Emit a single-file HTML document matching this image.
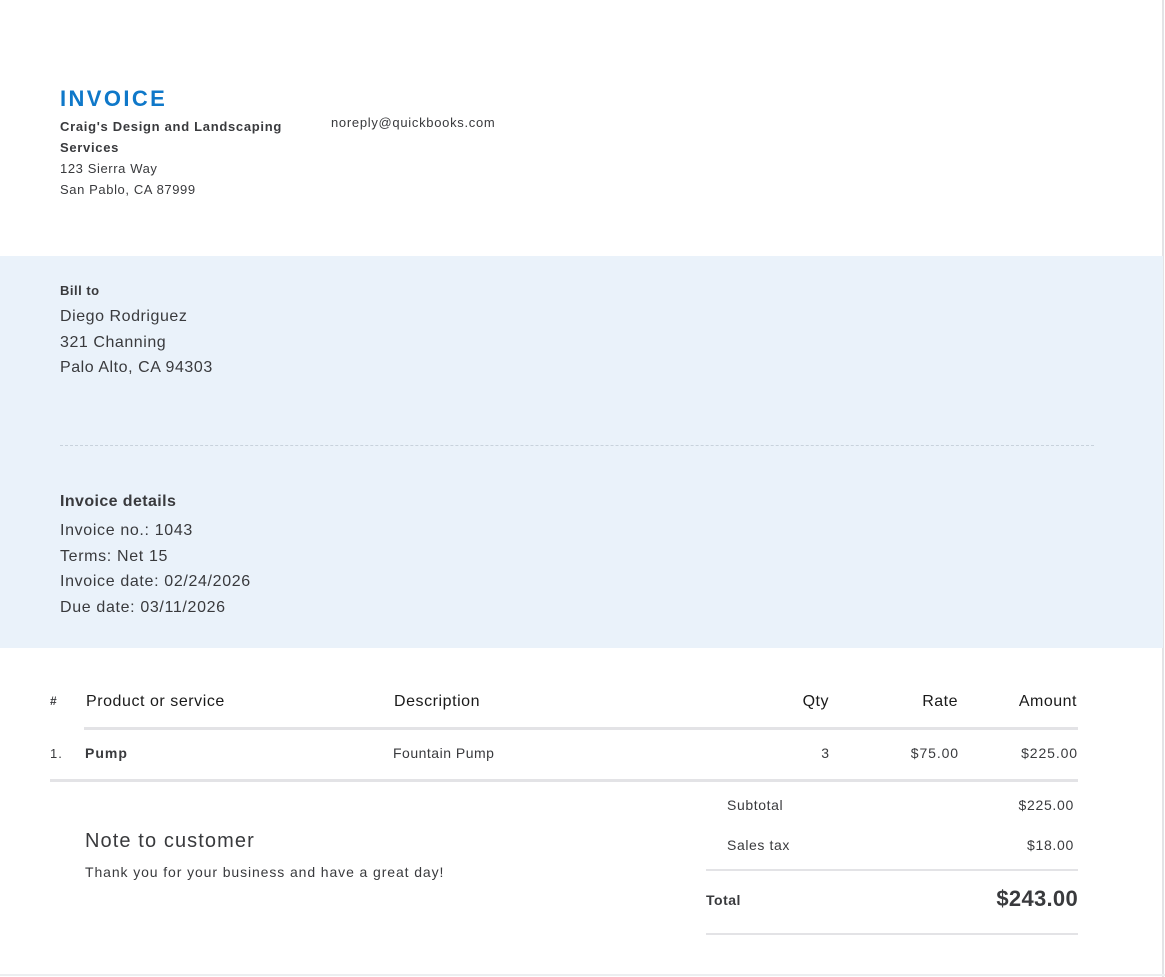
<!DOCTYPE html>
<html><head><meta charset="utf-8"><style>
*{margin:0;padding:0;box-sizing:border-box}
body{width:1165px;height:977px;background:#fff;font-family:"Liberation Sans",Arial,sans-serif;color:#393a3d;position:relative;overflow:hidden}
.a{position:absolute;white-space:nowrap}
.r{text-align:right}
</style></head><body>
<div class="a" style="left:1162px;top:0;width:2px;height:977px;background:#e3e3e6"></div>
<div class="a" style="left:0;top:974px;width:1165px;height:2px;background:#eceef0"></div>

<div class="a" style="left:60px;top:86px;font-size:22px;font-weight:bold;color:#0f78c9;letter-spacing:2.4px">INVOICE</div>
<div class="a" style="left:60px;top:116px;font-size:13px;font-weight:bold;line-height:21px;letter-spacing:0.7px">Craig's Design and Landscaping<br>Services</div>
<div class="a" style="left:60px;top:158px;font-size:13px;line-height:21px;letter-spacing:0.6px">123 Sierra Way<br>San Pablo, CA 87999</div>
<div class="a" style="left:331px;top:115px;font-size:13px;letter-spacing:0.7px">noreply@quickbooks.com</div>

<div class="a" style="left:0;top:256px;width:1163px;height:392px;background:#eaf2fa"></div>
<div class="a" style="left:60px;top:283px;font-size:13px;font-weight:bold;letter-spacing:0.5px">Bill to</div>
<div class="a" style="left:60px;top:304px;font-size:16px;line-height:25.5px;letter-spacing:0.55px">Diego Rodriguez<br>321 Channing<br>Palo Alto, CA 94303</div>
<div class="a" style="left:60px;top:445px;width:1034px;border-top:1px dashed #c8d2dc"></div>
<div class="a" style="left:60px;top:493px;font-size:16px;font-weight:bold;letter-spacing:0.4px">Invoice details</div>
<div class="a" style="left:60px;top:518px;font-size:16px;line-height:25.7px;letter-spacing:0.65px">Invoice no.: 1043<br>Terms: Net 15<br>Invoice date: 02/24/2026<br>Due date: 03/11/2026</div>

<div class="a" style="left:50px;top:694px;font-size:12px;font-weight:bold">#</div>
<div class="a" style="left:86px;top:693px;font-size:16px;color:#1a1a1a;letter-spacing:0.55px">Product or service</div>
<div class="a" style="left:394px;top:693px;font-size:16px;color:#1a1a1a;letter-spacing:0.55px">Description</div>
<div class="a r" style="left:700px;width:129px;top:693px;font-size:16px;color:#1a1a1a;letter-spacing:0.5px">Qty</div>
<div class="a r" style="left:860px;width:98px;top:693px;font-size:16px;color:#1a1a1a;letter-spacing:0.5px">Rate</div>
<div class="a r" style="left:980px;width:97px;top:693px;font-size:16px;color:#1a1a1a;letter-spacing:0.5px">Amount</div>
<div class="a" style="left:84px;top:727px;width:994px;height:3px;background:#e3e3e6"></div>

<div class="a" style="left:50px;top:746px;font-size:13px;letter-spacing:1px">1.</div>
<div class="a" style="left:85px;top:745px;font-size:14px;font-weight:bold;letter-spacing:1px">Pump</div>
<div class="a" style="left:393px;top:745px;font-size:14px;letter-spacing:0.5px">Fountain Pump</div>
<div class="a r" style="left:700px;width:129px;top:745px;font-size:14px">3</div>
<div class="a r" style="left:860px;width:99px;top:745px;font-size:14px;letter-spacing:0.9px">$75.00</div>
<div class="a r" style="left:980px;width:98px;top:745px;font-size:14px;letter-spacing:0.9px">$225.00</div>
<div class="a" style="left:50px;top:779px;width:1028px;height:3px;background:#e3e3e6"></div>

<div class="a" style="left:85px;top:830px;font-size:20px;letter-spacing:1.1px">Note to customer</div>
<div class="a" style="left:85px;top:864px;font-size:14px;letter-spacing:0.9px">Thank you for your business and have a great day!</div>

<div class="a" style="left:727px;top:797px;font-size:14px;letter-spacing:0.6px">Subtotal</div>
<div class="a r" style="left:960px;width:114px;top:797px;font-size:14px;letter-spacing:0.7px">$225.00</div>
<div class="a" style="left:727px;top:837px;font-size:14px;letter-spacing:0.6px">Sales tax</div>
<div class="a r" style="left:960px;width:114px;top:837px;font-size:14px;letter-spacing:0.7px">$18.00</div>
<div class="a" style="left:706px;top:869px;width:372px;height:2px;background:#e3e3e6"></div>
<div class="a" style="left:706px;top:892px;font-size:14px;font-weight:bold;letter-spacing:0.5px">Total</div>
<div class="a r" style="left:900px;width:178px;top:886px;font-size:22px;font-weight:bold;letter-spacing:0.3px">$243.00</div>
<div class="a" style="left:706px;top:933px;width:372px;height:2px;background:#e3e3e6"></div>
</body></html>
